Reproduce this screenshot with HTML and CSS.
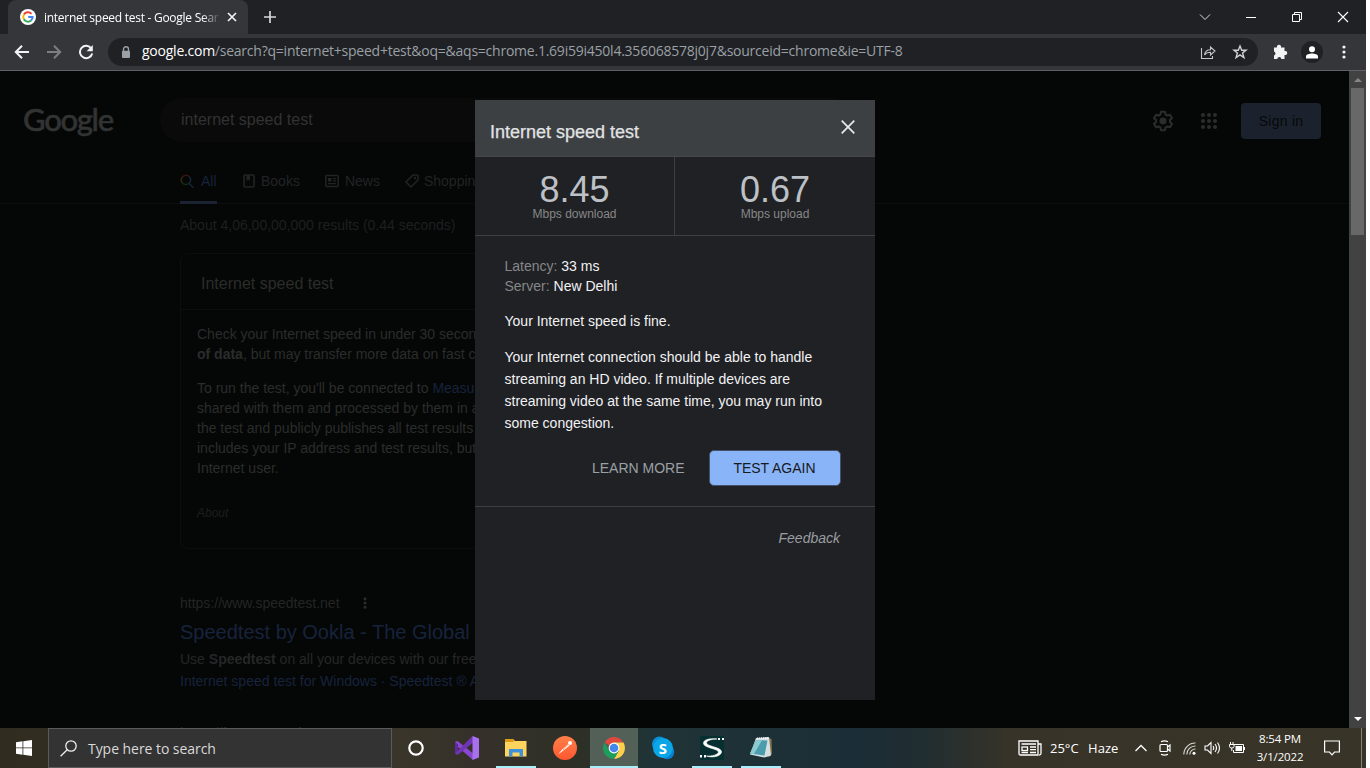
FILE: index.html
```html
<!DOCTYPE html>
<html lang="en">
<head>
<meta charset="utf-8">
<title>internet speed test - Google Search</title>
<link rel="stylesheet" href="styles.css">
</head>
<body>
<div class="screen">
  <header class="tabstrip">
    <div class="tab">
      <svg class="favicon" width="16" height="16" viewBox="0 0 16 16"><circle cx="8" cy="8" r="8" fill="#fff"/><g fill="none" stroke-width="2"><path d="M3.9 5.6A4.7 4.7 0 0 1 11.5 4.8" stroke="#ea4335"/><path d="M3.9 5.5A5 5 0 0 0 3.9 10.4" stroke="#fbbc05"/><path d="M3.9 10.3A4.7 4.7 0 0 0 11 11.6" stroke="#34a853"/><path d="M8.2 8H12.6A4.7 4.7 0 0 1 11 11.6" stroke="#4285f4"/></g></svg>
      <span class="tab-title">internet speed test - Google Sear</span>
      <svg class="tab-close" width="10" height="10" viewBox="0 0 10 10"><path d="M1 1L9 9M9 1L1 9" stroke="#f1f3f4" stroke-width="1.7"/></svg>
    </div>
    <svg class="newtab" width="12" height="12" viewBox="0 0 12 12"><path d="M6 0V12M0 6H12" stroke="#d5d7da" stroke-width="1.7"/></svg>
    <div class="winbtns">
      <svg width="12" height="12" viewBox="0 0 12 12"><path d="M1 3.500L6 8.500L11 3.500" fill="none" stroke="#ddd"/></svg>
      <svg width="12" height="12" viewBox="0 0 12 12"><path d="M1 6.500H11" stroke="#fff"/></svg>
      <svg width="12" height="12" viewBox="0 0 12 12"><path d="M1.500 3.500H8.500V10.500H1.500ZM3.500 3.500V1.500H10.500V8.500H8.500" fill="none" stroke="#fff"/></svg>
      <svg width="12" height="12" viewBox="0 0 12 12"><path d="M1 1L11 11M11 1L1 11" stroke="#fff" stroke-width="1.100"/></svg>
    </div>
  </header>
  <nav class="toolbar">
    <div class="navbtns">
      <svg width="16" height="16" viewBox="0 0 16 16"><path d="M15 8H2M8 1.800L1.800 8L8 14.200" fill="none" stroke="#f1f3f4" stroke-width="2"/></svg>
      <svg width="16" height="16" viewBox="0 0 16 16"><path d="M1 8H14M8 1.800L14.200 8L8 14.200" fill="none" stroke="#7d7e81" stroke-width="2"/></svg>
      <svg width="16" height="16" viewBox="0 0 16 16"><path d="M13.300 4.500A6.200 6.200 0 1 0 14.200 9.500" fill="none" stroke="#f1f3f4" stroke-width="2"/><path d="M14.800 1V7.200H8.600Z" fill="#f1f3f4"/></svg>
    </div>
    <div class="omnibox">
      <svg width="10" height="13" viewBox="0 0 10 13"><path d="M2.500 5.500V3.300A2.500 2.500 0 0 1 7.500 3.300V5.500" fill="none" stroke="#9aa0a6" stroke-width="1.400"/><rect x="1" y="4.700" width="8" height="7.300" rx="1" fill="#9aa0a6"/></svg>
      <span class="url"><b>google.com</b>/search?q=internet+speed+test&amp;oq=&amp;aqs=chrome.1.69i59i450l4.356068578j0j7&amp;sourceid=chrome&amp;ie=UTF-8</span>
      <svg class="share" width="16" height="16" viewBox="0 0 16 16"><path d="M1.500 4V14.500H12.500V12M4.500 11C5 7.500 7 5.800 10.500 5.800V3L15 7L10.500 11V8.300C7.500 8.300 6 9 4.500 11Z" fill="none" stroke="#c4c7c9" stroke-width="1.100"/></svg>
      <svg class="star" width="16" height="16" viewBox="0 0 16 16"><path d="M8 2L9.700 6.200H14L10.600 9L11.900 13.500L8 10.900L4.100 13.500L5.400 9L2 6.200H6.300Z" fill="none" stroke="#d0d2d4" stroke-width="1.400"/></svg>
    </div>
    <svg class="puzzle" width="16" height="16" viewBox="0 0 16 16"><path d="M2 3.500H5A2.100 2.100 0 1 1 9 3.500H12.500V7A2.100 2.100 0 1 1 12.500 11V15H9.300A2 2 0 0 0 5.300 15H2V11.500A2.100 2.100 0 0 0 2 7.500Z" fill="#f1f3f4"/></svg>
    <span class="avatar"><svg width="12" height="13" viewBox="0 0 12 13"><circle cx="6" cy="3.300" r="3" fill="#fff"/><path d="M0 12.500V10.500C0 8.500 3.500 7.600 6 7.600S12 8.500 12 10.500V12.500Z" fill="#fff"/></svg></span>
    <svg class="kebab" width="4" height="14" viewBox="0 0 4 14"><g fill="#f1f3f4"><circle cx="2" cy="2" r="1.600"/><circle cx="2" cy="7" r="1.600"/><circle cx="2" cy="12" r="1.600"/></g></svg>
  </nav>

  <div class="viewport">
    <main class="page">
      <div class="top">
        <div class="logo">Google</div>
        <div class="searchbox">internet speed test</div>
        <div class="account">
          <svg width="22" height="22" viewBox="0 0 24 24"><path d="M9.800 2h4.400l.6 2.900 2 1.100 2.800-.9 2.200 3.800-2.200 1.900v2.400l2.200 1.900-2.200 3.800-2.800-.9-2 1.100-.6 2.900H9.800l-.6-2.900-2-1.100-2.800.9-2.200-3.800 2.200-1.900v-2.400L2.200 8.900l2.200-3.800 2.800.9 2-1.100Z" fill="none" stroke="#2b2d2d" stroke-width="2.200" stroke-linejoin="round"/><circle cx="12" cy="12" r="3.800" fill="#2b2d2d"/></svg>
          <svg width="16" height="16" viewBox="0 0 16 16"><g fill="#2b2d2d"><circle cx="2" cy="2" r="2"/><circle cx="8" cy="2" r="2"/><circle cx="14" cy="2" r="2"/><circle cx="2" cy="8" r="2"/><circle cx="8" cy="8" r="2"/><circle cx="14" cy="8" r="2"/><circle cx="2" cy="14" r="2"/><circle cx="8" cy="14" r="2"/><circle cx="14" cy="14" r="2"/></g></svg>
          <span class="signin">Sign in</span>
        </div>
      </div>
      <div class="filters">
        <span class="filter active"><svg width="15" height="15" viewBox="0 0 15 15"><g fill="none" stroke-width="1.500"><path d="M2 8.500A4.500 4.500 0 0 1 2.500 3" stroke="#35290a"/><path d="M2.300 3.200A4.600 4.600 0 0 1 9.500 2.800" stroke="#3a1512"/><path d="M9.500 2.800A4.600 4.600 0 0 1 9 9.300L13.500 13.800" stroke="#17233c"/><path d="M9 9.300A4.600 4.600 0 0 1 2 8.300" stroke="#102a18"/></g></svg>All</span>
        <span class="filter books"><svg width="12" height="14" viewBox="0 0 12 14"><rect x="1" y="1" width="10" height="12" rx="1" fill="none" stroke="#222324" stroke-width="1.600"/><path d="M3.500 1H7V7L5.200 5.600L3.500 7Z" fill="#222324"/></svg>Books</span>
        <span class="filter news"><svg width="14" height="14" viewBox="0 0 14 14"><rect x=".8" y="1.500" width="12.400" height="11" rx="1" fill="none" stroke="#222324" stroke-width="1.500"/><path d="M3 4H6.500V7.500H3ZM8 4H11V5.200H8ZM8 6.300H11V7.500H8ZM3 9H11V10.300H3Z" fill="#222324"/></svg>News</span>
        <span class="filter shop"><svg width="14" height="14" viewBox="0 0 14 14"><path d="M8 1H12.200L13 1.800V6L6 13L1 8Z" fill="none" stroke="#222324" stroke-width="1.500" stroke-linejoin="round"/><circle cx="10" cy="4" r="1.200" fill="#222324"/></svg>Shopping</span>
      </div>
      <div class="content">
        <div class="stats">About 4,06,00,00,000 results (0.44 seconds)</div>
        <section class="card">
          <h2>Internet speed test</h2>
          <div class="card-body">
            <p>Check your Internet speed in under 30 seconds.<br><b>of data</b>, but may transfer more data on fast co</p>
            <p>To run the test, you'll be connected to <a>Measure</a><br>shared with them and processed by them in ac<br>the test and publicly publishes all test results<br>includes your IP address and test results, but d<br>Internet user.</p>
            <p class="about">About</p>
          </div>
        </section>
        <article class="result">
          <div class="cite">https://www.speedtest.net<svg width="4" height="12" viewBox="0 0 4 12"><g fill="#2b2d2d"><circle cx="2" cy="1.800" r="1.500"/><circle cx="2" cy="6" r="1.500"/><circle cx="2" cy="10.200" r="1.500"/></g></svg></div>
          <h3>Speedtest by Ookla - The Global</h3>
          <p>Use <b>Speedtest</b> on all your devices with our free</p>
          <p class="links">Internet speed test for Windows · Speedtest ® An</p>
        </article>
        <article class="result next">
          <div class="cite">https://fast.com<svg width="4" height="12" viewBox="0 0 4 12"><circle cx="2" cy="1.800" r="1.500" fill="#2b2d2d"/></svg></div>
        </article>
      </div>
    </main>
    <aside class="scrollbar">
      <svg width="8" height="4" viewBox="0 0 8 4"><path d="M0 4L4 0L8 4Z" fill="#868686"/></svg>
      <div class="thumb"></div>
      <svg class="down" width="8" height="4" viewBox="0 0 8 4"><path d="M0 0H8L4 4Z" fill="#fff"/></svg>
    </aside>
    <section class="modal">
      <div class="modal-head"><span>Internet speed test</span><svg width="14" height="14" viewBox="0 0 14 14"><path d="M.7 .7L13.300 13.300M13.300 .7L.7 13.300" stroke="#e8eaed" stroke-width="1.700"/></svg></div>
      <div class="speeds">
        <div class="speed"><strong>8.45</strong><small>Mbps download</small></div>
        <div class="speed"><strong>0.67</strong><small>Mbps upload</small></div>
      </div>
      <div class="details">
        <div class="meta"><span>Latency:</span> 33 ms<br><span>Server:</span> New Delhi</div>
        <p>Your Internet speed is fine.</p>
        <p class="advice">Your Internet connection should be able to handle streaming an HD video. If multiple devices are streaming video at the same time, you may run into some congestion.</p>
        <div class="actions"><span class="learn">LEARN MORE</span><span class="again">TEST AGAIN</span></div>
      </div>
      <div class="feedback">Feedback</div>
    </section>
  </div>

  <footer class="taskbar">
    <div class="start"><svg width="16" height="16" viewBox="0 0 16 16"><path d="M0 2.200L6.500 1.300V7.500H0ZM7.300 1.200L16 0V7.500H7.300ZM0 8.300H6.500V14.700L0 13.800ZM7.300 8.300H16V16L7.300 14.800Z" fill="#fff"/></svg></div>
    <div class="tasksearch"><svg width="17" height="17" viewBox="0 0 17 17"><circle cx="11" cy="6" r="5.200" fill="none" stroke="#eee" stroke-width="1.300"/><path d="M7.200 9.700L.6 16.300" stroke="#eee" stroke-width="1.300"/></svg><span>Type here to search</span></div>
    <div class="app"><svg width="16" height="16" viewBox="0 0 16 16"><circle cx="8" cy="8" r="6.700" fill="none" stroke="#fff" stroke-width="2.200"/></svg></div>
    <div class="app vs"><svg width="24" height="24" viewBox="0 0 24 24"><path d="M0 6L2.500 5L19 18L18 24L0 8.500Z" fill="#8a48d0"/><path d="M0 6L3 8.500V15.500L0 18Z" fill="#5d2c9c"/><path d="M0 17.500L17.500 0L19 6L2.500 19Z" fill="#6f35b5"/><path d="M17.500 0L24 2.500V21.500L17.500 24Z" fill="#a970ee"/></svg></div>
    <div class="app running"><svg width="22" height="20" viewBox="0 0 22 20"><path d="M0 1H8L10 3H21.500V18.500H0Z" fill="#ffd45e"/><path d="M0 1H8L9.500 2.500L8 4H0Z" fill="#dd9a13"/><path d="M4 11H18V18.500H14.500V14.500H7.500V18.500H4Z" fill="#3d91d8"/></svg></div>
    <div class="app"><svg width="24" height="24" viewBox="0 0 24 24"><defs><linearGradient id="pm" x1="0" y1="0" x2="0" y2="1"><stop offset="0" stop-color="#ff8048"/><stop offset="1" stop-color="#ff5730"/></linearGradient></defs><circle cx="12" cy="12" r="12" fill="url(#pm)"/><path d="M5 18.500L9.500 13L15 8.200L16.500 9.600L11 14Z" fill="#fff"/><circle cx="17" cy="7" r="2" fill="#fff"/><path d="M9.500 12.500L11 14M15 8.500L10.500 13" stroke="#ff6437" stroke-width=".7"/></svg></div>
    <div class="app running current"><svg width="22" height="22" viewBox="0 0 22 22"><path d="M11 11L1.500 5.500A11 11 0 0 1 20.500 5.500H11Z" fill="#df493d"/><path d="M11 5.500H20.500A11 11 0 0 1 11 22L15.800 13.700Z" fill="#fcd04b"/><path d="M1.500 5.500A11 11 0 0 0 11 22L15.800 13.700L6.200 13.700Z" fill="#1c9f5c"/><circle cx="11" cy="11" r="5.400" fill="#fff"/><circle cx="11" cy="11" r="4.300" fill="#4586ed"/></svg></div>
    <div class="app skype"><svg width="24" height="24" viewBox="0 0 24 24"><circle cx="8.500" cy="8" r="7.500" fill="#0b8ed6"/><circle cx="16" cy="16" r="7.300" fill="#0a7fd0"/><circle cx="12" cy="12" r="10" fill="#0aa6e8"/></svg><b>S</b></div>
    <div class="app running"><svg width="24" height="24" viewBox="0 0 24 24"><path d="M0 0H24V24H0Z" fill="#052f31"/><path d="M17 3C9 2 3 4 3.500 7.500C4 12 18 12.500 18.500 16C18.500 18.500 12 20.500 6.500 20C14 22.500 22 19.500 21.500 15.500C21 11 7 10.500 6.500 7C6.500 4.500 11 3.200 17 3Z" fill="#fff" stroke="#fff" stroke-width=".6"/><path d="M18 2H20V4H18ZM22 2H24V4H22ZM0 19H2V21.500H0ZM4 19H6V21.500H4Z" fill="#fff"/></svg></div>
    <div class="app running"><svg width="24" height="24" viewBox="0 0 24 24"><path d="M20 2L22.500 3L23 18L20 21L17 20Z" fill="#8a704d"/><path d="M7 2L20 1L22 19.500L15.500 21.500L1 18.500Z" fill="#d4e0e2"/><path d="M7 4L18.500 4.500L15.500 19.500L1 17.500Z" fill="#4b9dad"/><path d="M7 4L13 4.300L5 18L1 17.500Z" fill="#8cc9d0"/><path d="M8 2.500L20 2" stroke="#eef3f3" stroke-width="2" stroke-dasharray="1 1"/></svg></div>
    <div class="tray">
      <svg class="paper" width="24" height="16" viewBox="0 0 24 16"><path d="M1 1H20V15H2.500Q1 15 1 13.500ZM20 4H23V13.500Q23 15 21 15M3.500 4H18M3.500 12.500H10M12 7H18M12 9.700H18M12 12.500H18" fill="none" stroke="#fff" stroke-width="1.300"/><rect x="4" y="7" width="5.500" height="3.500" fill="none" stroke="#fff" stroke-width="1.300"/></svg>
      <span class="temp">25°C</span><span class="haze">Haze</span>
      <svg class="chev" width="12" height="8" viewBox="0 0 12 8"><path d="M.5 7L6 1.500L11.500 7" fill="none" stroke="#fff" stroke-width="1.300"/></svg>
      <svg class="meet" width="12" height="16" viewBox="0 0 12 16"><path d="M2 1.800Q5.500 0 9 1.800M2 14.200Q5.500 16 9 14.200M8.500 7L11 5V11L8.500 9" fill="none" stroke="#fff" stroke-width="1.200"/><rect x="1" y="4.500" width="7.500" height="7" rx="1" fill="none" stroke="#fff" stroke-width="1.200"/></svg>
      <svg class="wifi" width="13" height="13" viewBox="0 0 13 13"><g fill="none" stroke="#d9d8d3" stroke-width="1.100"><path d="M.8 12.500A11.500 11.500 0 0 1 12.500 1"/><path d="M3.800 12.500A8.500 8.500 0 0 1 12.500 4"/><path d="M6.800 12.500A5.500 5.500 0 0 1 12.500 7"/></g><circle cx="11" cy="11.200" r="1.500" fill="#fff"/></svg>
      <svg class="sound" width="17" height="14" viewBox="0 0 17 14"><path d="M1 5H3.500L7 1.500V12.500L3.500 9H1ZM9 5Q10.500 7 9 9M11 3Q14 7 11 11M13.500 1.500Q17.500 7 13.500 12.500" fill="none" stroke="#fff" stroke-width="1.100"/></svg>
      <svg class="battery" width="17" height="12" viewBox="0 0 17 12"><path d="M5 2.500H14.500V10.500H4.500V8M15.500 5V8M1.500 0V2.500M4 0V2.500M.5 2.500H5V4.500Q5 6 2.800 6Q.5 6 .5 4.500ZM2.800 6V9" fill="none" stroke="#fff"/><path d="M6.500 4H13V9H6.500Z" fill="#fff"/></svg>
      <div class="clock">8:54 PM<br>3/1/2022</div>
      <svg class="note" width="16" height="16" viewBox="0 0 16 16"><path d="M.6 1H15.400V12H10.500L8 14.800L5.500 12H.6Z" fill="none" stroke="#fff" stroke-width="1.200"/></svg>
      <div class="peek"></div>
    </div>
  </footer>
</div>
</body>
</html>
```
FILE: styles.css
```css
* { box-sizing: border-box; }
html { background: #fff; }
body { margin: 0; font-family: "Liberation Sans", Arial, sans-serif; }
svg { display: block; flex: none; }
h2, h3, p { margin: 0; font-weight: 400; }
.screen { width: 1366px; height: 768px; overflow: hidden; display: flex; flex-direction: column; }

.tabstrip { height: 34px; background: #202124; display: flex; padding-left: 8px; align-items: center; flex: none; font-family: "Open Sans", sans-serif; }
.tab { width: 240px; height: 34px; background: #35363a; border-radius: 8px 8px 0 0; display: flex; align-items: center; padding-left: 12px; }
.tab-title { margin-left: 8px; width: 176px; font-size: 12px; letter-spacing: -.27px; color: #fff; white-space: nowrap; -webkit-mask-image: linear-gradient(90deg, #000 158px, transparent 177px); mask-image: linear-gradient(90deg, #000 158px, transparent 177px); }
.tab-close { margin-left: 7px; }
.newtab { margin-left: 16px; }
.winbtns { margin-left: auto; display: flex; gap: 34px; padding-right: 17px; height: 28px; align-items: center; }

.toolbar { height: 37px; background: #35363a; border-bottom: 1px solid #5f6165; display: flex; align-items: center; flex: none; font-family: "Open Sans", sans-serif; }
.navbtns { display: flex; gap: 16px; margin-left: 14px; }
.omnibox { margin-left: 14px; width: 1150px; height: 28px; border-radius: 14px; background: #202124; display: flex; align-items: center; padding-left: 13px; }
.url { margin-left: 11px; width: 1058px; font-size: 14px; line-height: 26px; height: 28px; letter-spacing: -.235px; color: #9aa0a6; white-space: nowrap; }
.url b { font-weight: 400; color: #fff; }
.star { margin-left: 16px; }
.puzzle { margin-left: 14px; }
.avatar { margin-left: 13px; width: 22px; height: 22px; border-radius: 50%; background: #202124; display: flex; align-items: center; justify-content: center; }
.kebab { margin-left: 19px; }

.viewport { position: relative; height: 657px; display: flex; overflow: hidden; flex: none; }
.page { width: 1349px; background: #050706; color: #2b2c2c; overflow: hidden; font-size: 14px; white-space: nowrap; }
.top { height: 97px; padding-top: 27px; display: flex; align-items: flex-start; }
.logo { width: 137px; margin-left: 23px; height: 44px; font: 500 31px/42px Lato, sans-serif; letter-spacing: -1.3px; color: #323333; -webkit-text-stroke: .5px #323333; }
.searchbox { width: 692px; height: 44px; border-radius: 22px; background: #0a0a0a; padding-left: 21px; font-size: 16px; line-height: 43px; color: #323232; }
.account { margin-left: auto; margin-right: 28px; height: 46px; display: flex; align-items: center; }
.account svg + svg { margin-left: 27px; }
.signin { margin-left: 24px; width: 80px; height: 36px; background: #1b222e; border-radius: 4px; color: #070808; text-align: center; line-height: 36px; letter-spacing: .25px; }
.filters { height: 36px; border-bottom: 1px solid #0c0e0e; padding-left: 180px; display: flex; color: #222324; line-height: 26px; }
.filter { display: flex; align-items: center; height: 36px; padding-bottom: 10px; gap: 5px; }
.filter.active { width: 37px; color: #17233c; border-bottom: 3px solid #1b2333; padding-bottom: 7px; gap: 6px; }
.books { margin-left: 26px; gap: 6px; }
.news { margin-left: 25px; gap: 6px; }
.shop { margin-left: 25px; gap: 5px; }
.content { padding-left: 180px; }
.stats { padding-top: 11px; line-height: 20px; color: #1e1f20; }
.card { margin-top: 18px; width: 652px; height: 296px; border: 1px solid #0c0e0e; border-radius: 8px; }
.card h2 { height: 56px; border-bottom: 1px solid #0c0e0e; padding-left: 20px; font-size: 16px; line-height: 59px; }
.card-body { padding: 14px 16px; line-height: 20px; }
.card-body p { margin-bottom: 14px; }
.card a { color: #17233c; }
.card .about { padding-top: 11px; font-size: 12px; font-style: italic; color: #1d1e1f; }
.result { margin-top: 44px; }
.cite { display: flex; align-items: center; height: 20px; gap: 23px; color: #232525; }
.result h3 { color: #17233c; font-size: 20px; line-height: 30px; padding-top: 4px; margin-bottom: 1px; }
.result p { line-height: 22px; color: #252626; }
.result .links { color: #17233c; }
.result.next { margin-top: 31px; }

.scrollbar { width: 17px; background: #424242; display: flex; flex-direction: column; align-items: center; padding-top: 7px; padding-bottom: 7px; }
.thumb { width: 13px; height: 147px; background: #686868; margin-top: 6px; }
.down { margin-top: auto; }

.modal { position: absolute; left: 475px; top: 29px; width: 400px; height: 600px; background: #202124; color: #f1f2f4; font-size: 14px; }
.modal-head { height: 57px; background: #3c4043; border-bottom: 1px solid #45494c; display: flex; justify-content: space-between; padding: 20px 20px 0 15px; font-size: 18px; line-height: 24px; color: #e2e3e4; }
.modal-head span { -webkit-text-stroke: .25px #e2e3e4; }
.speeds { height: 79px; display: flex; border-bottom: 1px solid #3c4043; }
.speed { width: 200px; display: flex; flex-direction: column; align-items: center; color: #bdc1c6; padding-top: 15px; }
.speed:first-child { border-right: 1px solid #3c4043; }
.speed strong { font-size: 36px; line-height: 36px; font-weight: 400; }
.speed small { margin-top: -1px; font-size: 12px; line-height: 14px; color: #878787; }
.details { height: 271px; padding: 20px 34px 0 29.500px; border-bottom: 1px solid #3c4043; }
.meta { line-height: 20px; }
.meta span { color: #85878a; }
.details p { line-height: 22px; margin-top: 14px; }
.actions { display: flex; justify-content: flex-end; align-items: center; margin-top: 16px; padding-right: .5px; gap: 24px; }
.learn { color: #9aa0a6; }
.again { width: 132px; height: 36px; border-radius: 5px; border: 1px solid #45516a; background: #8ab4f8; color: #171a20; text-align: center; line-height: 34px; }
.feedback { text-align: right; padding: 20px 35px; line-height: 22px; font-style: italic; color: #999da2; }

.taskbar { height: 40px; background: linear-gradient(90deg, #302c20 0, #39352a 400px, #34302a 500px, #2d3026 580px, #203437 650px, #1b2d36 860px, #202d31 920px, #373328 1010px, #383428 1366px); display: flex; flex: none; font-family: "Open Sans", sans-serif; color: #fff; }
.start { width: 48px; display: flex; align-items: center; justify-content: center; }
.tasksearch { width: 344px; height: 40px; border: 1px solid #5b5b5b; background: #333; display: flex; align-items: center; padding-left: 11px; color: #d9d9d9; font-size: 14px; }
.tasksearch span { margin-left: 11px; letter-spacing: -.05px; }
.app { width: 48px; height: 40px; margin-right: 1px; display: flex; align-items: center; justify-content: center; position: relative; }
.app.vs { margin-left: 2px; }
.running::after { content: ""; position: absolute; left: 4px; right: 4px; bottom: 0; height: 2px; background: #a9eefb; }
.current { background: #536057; }
.current::after { left: 0; right: 0; }
.skype b { position: absolute; font-size: 15px; line-height: 20px; }
.tray { margin-left: auto; width: 348px; display: flex; align-items: center; font-size: 13px; }
.temp { margin-left: 8px; width: 38px; letter-spacing: 0; }
.haze { width: 32px; letter-spacing: .05px; }
.chev { margin-left: 15px; }
.meet { margin-left: 12px; }
.wifi { margin-left: 12px; }
.sound { margin-left: 8px; }
.battery { margin-left: 8px; }
.clock { margin-left: 9px; width: 50px; font-size: 11.500px; line-height: 18px; text-align: center; letter-spacing: -.15px; white-space: nowrap; }
.note { margin-left: 19px; }
.peek { margin-left: auto; margin-right: 4px; width: 1px; height: 40px; background: #85827a; }
```
